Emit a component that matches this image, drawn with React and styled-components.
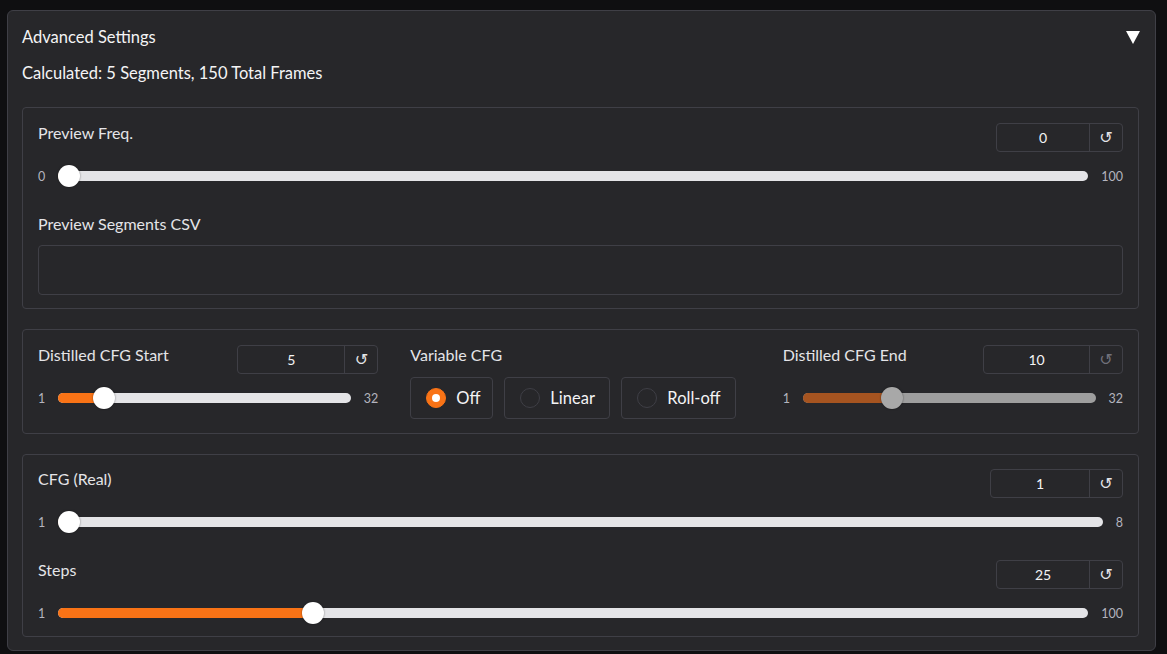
import React, { useState } from 'react';
import styled, { createGlobalStyle } from 'styled-components';

const GlobalStyle = createGlobalStyle`
  html, body {
    margin: 0;
    padding: 0;
    background: #0f0f11;
  }
  body {
    font-family: Lato, "Liberation Sans", sans-serif;
    color: #e4e4e7;
  }
  * { box-sizing: border-box; }
`;

const Page = styled.div`
  padding: 10px 11px 4px 7px;
  width: 1167px;
  height: 654px;
`;

const Panel = styled.div`
  background: #27272a;
  border: 1px solid #3f3f46;
  border-radius: 6px;
  padding: 14px 16px 13px 14px;
  display: flex;
  flex-direction: column;
`;

const PanelHeader = styled.div`
  display: flex;
  align-items: center;
  justify-content: space-between;
  height: 24px;
`;

const Title = styled.div`
  font-size: 16.5px;
  color: #f4f4f5;
`;

const Caret = styled.svg`
  width: 14px;
  height: 13px;
  margin-right: -1px;
`;

const Summary = styled.div`
  font-size: 16.5px;
  color: #f4f4f5;
  margin-top: 12px;
  line-height: 24px;
`;

const Box = styled.div`
  border: 1px solid #3f3f46;
  border-radius: 4px;
  padding: ${(p) => p.$pt || 15}px 15px ${(p) => p.$bottom || 13}px;
  margin-top: ${(p) => p.$top || 20}px;
  display: flex;
  flex-direction: column;
  gap: ${(p) => p.$gap || 0}px;
`;

const Columns = styled.div`
  display: grid;
  grid-template-columns: repeat(3, 1fr);
  column-gap: 32px;
`;

const Field = styled.div`
  display: flex;
  flex-direction: column;
`;

const HeadRow = styled.div`
  display: flex;
  justify-content: space-between;
  align-items: flex-start;
  height: 30px;
`;

const Label = styled.div`
  font-size: 16px;
  line-height: 20px;
  color: #e4e4e7;
`;

const NumberBox = styled.div`
  display: flex;
  height: 29px;
  border: 1px solid #3f3f46;
  border-radius: 4px;
`;

const NumberValue = styled.div`
  width: ${(p) => p.$w}px;
  display: flex;
  align-items: center;
  justify-content: center;
  font-size: 14px;
  color: #f4f4f5;
  border-right: 1px solid #3f3f46;
`;

const Reset = styled.div`
  width: 32px;
  display: flex;
  align-items: center;
  justify-content: center;
  font-family: "DejaVu Sans", sans-serif;
  font-size: 16px;
  color: ${(p) => (p.$disabled ? '#71717a' : '#e4e4e7')};
`;

const SliderRow = styled.div`
  display: flex;
  align-items: center;
  height: 22px;
  margin-top: 12px;
`;

const MinLabel = styled.div`
  font-size: 12.5px;
  color: #b4b4be;
  width: 20px;
  flex-shrink: 0;
`;

const MaxLabel = styled.div`
  font-size: 12.5px;
  color: #b4b4be;
  padding-left: 13px;
  flex-shrink: 0;
`;

const Track = styled.div`
  position: relative;
  flex: 1;
  height: 10px;
  border-radius: 5px;
  background: ${(p) => (p.$disabled ? '#9e9e9e' : '#e4e4e7')};
`;

const Fill = styled.div`
  position: absolute;
  left: 0;
  top: 0;
  bottom: 0;
  border-radius: 5px;
  background: ${(p) => (p.$disabled ? '#a65420' : '#f97316')};
`;

const Thumb = styled.div`
  position: absolute;
  top: 50%;
  width: 22px;
  height: 22px;
  margin-top: -11px;
  margin-left: -11px;
  border-radius: 50%;
  background: ${(p) => (p.$disabled ? '#a8a8a8' : '#ffffff')};
  box-shadow: 0 0 2px rgba(0, 0, 0, 0.5);
`;

const TextArea = styled.div`
  margin-top: 11px;
  height: 50px;
  border: 1px solid #3f3f46;
  border-radius: 4px;
`;

const RadioGroup = styled.div`
  display: flex;
  gap: 11px;
  margin-top: 12px;
`;

const RadioOption = styled.div`
  display: flex;
  align-items: center;
  gap: 10px;
  height: 42px;
  width: ${(p) => p.$w}px;
  padding-left: 15px;
  border: 1px solid #3f3f46;
  border-radius: 4px;
  font-size: 16.5px;
  color: #f4f4f5;
  cursor: pointer;
`;

const RadioDot = styled.span`
  width: 20px;
  height: 20px;
  border-radius: 50%;
  flex-shrink: 0;
  background: ${(p) => (p.$on ? '#f97316' : '#27272a')};
  border: 1px solid ${(p) => (p.$on ? '#f97316' : '#3f3f46')};
  display: flex;
  align-items: center;
  justify-content: center;
  &::after {
    content: '';
    width: 8px;
    height: 8px;
    border-radius: 50%;
    background: ${(p) => (p.$on ? '#ffffff' : 'transparent')};
  }
`;

function Slider({ label, value, min, max, inputW = 93, disabled }) {
  const frac = (value - min) / (max - min);
  const pos = `calc(11px + ${frac} * (100% - 22px))`;
  return (
    <Field>
      <HeadRow>
        <Label>{label}</Label>
        <NumberBox>
          <NumberValue $w={inputW}>{value}</NumberValue>
          <Reset $disabled={disabled}>↺</Reset>
        </NumberBox>
      </HeadRow>
      <SliderRow>
        <MinLabel>{min}</MinLabel>
        <Track $disabled={disabled}>
          <Fill $disabled={disabled} style={{ width: pos }} />
          <Thumb $disabled={disabled} style={{ left: pos }} />
        </Track>
        <MaxLabel>{max}</MaxLabel>
      </SliderRow>
    </Field>
  );
}

export default function App() {
  const [mode, setMode] = useState('Off');
  const modes = [
    ['Off', 83],
    ['Linear', 106],
    ['Roll-off', 115],
  ];

  return (
    <Page>
      <GlobalStyle />
      <Panel>
        <PanelHeader>
          <Title>Advanced Settings</Title>
          <Caret viewBox="0 0 14 13">
            <polygon points="0,0 14,0 7,13" fill="#ffffff" />
          </Caret>
        </PanelHeader>
        <Summary>Calculated: 5 Segments, 150 Total Frames</Summary>

        <Box $top={22} $gap={27}>
          <Slider label="Preview Freq." value={0} min={0} max={100} />
          <Field>
            <Label>Preview Segments CSV</Label>
            <TextArea />
          </Field>
        </Box>

        <Box $bottom={14}>
          <Columns>
            <Slider label="Distilled CFG Start" value={5} min={1} max={32} inputW={107} />
            <Field>
              <Label>Variable CFG</Label>
              <RadioGroup>
                {modes.map(([m, w]) => (
                  <RadioOption key={m} $w={w} onClick={() => setMode(m)}>
                    <RadioDot $on={mode === m} />
                    {m}
                  </RadioOption>
                ))}
              </RadioGroup>
            </Field>
            <Slider label="Distilled CFG End" value={10} min={1} max={32} inputW={106} disabled />
          </Columns>
        </Box>

        <Box $pt={14} $gap={27} $bottom={12}>
          <Slider label="CFG (Real)" value={1} min={1} max={8} inputW={99} />
          <Slider label="Steps" value={25} min={1} max={100} />
        </Box>
      </Panel>
    </Page>
  );
}
